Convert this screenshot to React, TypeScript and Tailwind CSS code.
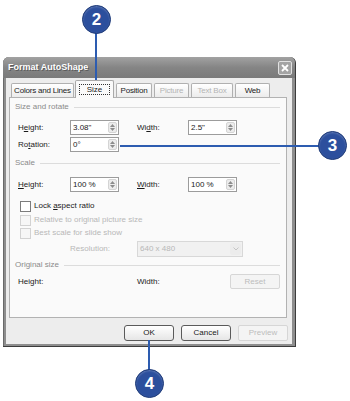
import React from "react";

const FONT = { fontFamily: '"Liberation Sans", Arial, sans-serif' };

function Spin() {
  return (
    <div className="flex h-[11px] w-[9px] flex-col items-center justify-center gap-[1px] rounded-[2px] border border-[#d4d4d4] bg-[#ececec]">
      <svg width="5" height="3" viewBox="0 0 5 3">
        <path d="M0 3 L2.5 0 L5 3Z" fill="#8c8c8c" />
      </svg>
      <svg width="5" height="3" viewBox="0 0 5 3">
        <path d="M0 0 L2.5 3 L5 0Z" fill="#8c8c8c" />
      </svg>
    </div>
  );
}

function Field({ value }: { value: string }) {
  return (
    <div className="flex h-[15px] w-[49px] items-center justify-between border border-[#9c9c9c] bg-white pl-[2px] pr-[1px]">
      <span className="whitespace-nowrap text-[8px] leading-none text-[#1a1a1a]">{value}</span>
      <Spin />
    </div>
  );
}

function Group({ label }: { label: string }) {
  return (
    <div className="flex h-[10px] items-center pl-[5px] pr-[6px]">
      <span className="whitespace-nowrap text-[8px] leading-none text-[#8a8a8a]">{label}</span>
      <div className="ml-[5px] h-px flex-1 bg-[#dcdcdc]" />
    </div>
  );
}

function Check({ label, disabled }: { label: React.ReactNode; disabled?: boolean }) {
  return (
    <div className="flex h-[12px] items-center pl-[10px]">
      <div
        className={
          disabled
            ? "h-[11px] w-[11px] border border-[#d2d2d2] bg-[#f6f6f6]"
            : "h-[11px] w-[11px] border border-[#7c7c7c] bg-white"
        }
      />
      <span
        className={
          disabled
            ? "ml-[3px] whitespace-nowrap text-[8px] leading-none text-[#b8b8b8]"
            : "ml-[3px] whitespace-nowrap text-[8px] leading-none text-[#1a1a1a]"
        }
      >
        {label}
      </span>
    </div>
  );
}

function Tab({
  label,
  w,
  disabled,
  selected,
}: {
  label: string;
  w: string;
  disabled?: boolean;
  selected?: boolean;
}) {
  if (selected) {
    return (
      <div
        className={`${w} relative z-10 -mb-px ml-[1px] flex h-[18px] shrink-0 items-center justify-center rounded-t-[2px] border border-b-0 border-[#a9a9a9] bg-[#fafafa] px-[3px]`}
      >
        <div className="flex h-[11px] w-full items-center justify-center border border-dotted border-[#333]">
          <span className="whitespace-nowrap text-[8px] leading-none text-[#1a1a1a]">{label}</span>
        </div>
      </div>
    );
  }
  return (
    <div
      className={`${w} ml-[2px] flex h-[14px] shrink-0 items-center justify-center rounded-t-[2px] border border-b-0 border-[#b0b0b0] bg-gradient-to-b from-[#ffffff] to-[#ececec]`}
    >
      <span
        className={
          disabled
            ? "whitespace-nowrap text-[8px] leading-none tracking-[-0.2px] text-[#b4b4b4]"
            : "whitespace-nowrap text-[8px] leading-none tracking-[-0.2px] text-[#1a1a1a]"
        }
      >
        {label}
      </span>
    </div>
  );
}

function Btn({ label, disabled }: { label: string; disabled?: boolean }) {
  return (
    <div
      className={
        disabled
          ? "flex h-[16px] w-[50px] items-center justify-center rounded-[2px] border border-[#d6d6d6] bg-[#f4f4f4]"
          : "flex h-[16px] w-[50px] items-center justify-center rounded-[3px] border border-[#5a5a5a] bg-gradient-to-b from-[#ffffff] to-[#e6e6e6]"
      }
    >
      <span
        className={
          disabled
            ? "text-[8px] leading-none text-[#bcbcbc]"
            : "text-[8px] leading-none text-[#1a1a1a]"
        }
      >
        {label}
      </span>
    </div>
  );
}

function Badge({ n, cls }: { n: string; cls: string }) {
  return (
    <div
      className={`${cls} absolute flex h-[29px] w-[29px] items-center justify-center rounded-full border border-[#1f3b78] bg-[#2c4f9d] shadow-[inset_0_1px_2px_rgba(255,255,255,0.25)]`}
    >
      <span
        className="text-[17px] font-bold leading-none text-white"
        style={{ fontFamily: '"Liberation Sans Narrow", "Liberation Sans", Arial, sans-serif' }}
      >
        {n}
      </span>
    </div>
  );
}

export default function App() {
  return (
    <div className="relative h-[401px] w-[350px] overflow-hidden bg-white" style={FONT}>
      {/* Dialog */}
      <div className="ml-[3px] mt-[57px] flex h-[290px] w-[293px] flex-col rounded-t-[6px] border-b border-r border-[#3c3c3c] bg-[#8e8e8e] shadow-[inset_1px_0_0_#6a6a6a]">
        {/* Title bar */}
        <div className="flex h-[21px] items-center justify-between rounded-t-[6px] bg-gradient-to-b from-[#a2a2a2] via-[#858585] to-[#7a7a7a] pl-[5px] pr-[3px]">
          <span className="whitespace-nowrap text-[9px] font-bold leading-none text-white [text-shadow:1px_1px_0_#5a5a5a]">
            Format AutoShape
          </span>
          <div className="flex h-[14px] w-[14px] items-center justify-center rounded-[2px] border border-[#e2e2e2] bg-[#a4a4a4]">
            <svg width="8" height="8" viewBox="0 0 8 8">
              <path d="M1 1 L7 7 M7 1 L1 7" stroke="#ffffff" strokeWidth="1.8" />
            </svg>
          </div>
        </div>
        {/* Body */}
        <div className="mx-[3px] mb-[2px] flex flex-1 flex-col bg-[#ededed] pl-[3px] pr-[4px] pt-[2px]">
          {/* Tabs */}
          <div className="flex h-[17px] items-end">
            <Tab label="Colors and Lines" w="w-[63px]" />
            <Tab label="Size" w="w-[39px]" selected />
            <Tab label="Position" w="w-[36px]" />
            <Tab label="Picture" w="w-[35px]" disabled />
            <Tab label="Text Box" w="w-[42px]" disabled />
            <Tab label="Web" w="w-[35px]" />
          </div>
          {/* Panel */}
          <div className="mr-[1px] flex h-[221px] flex-col border border-[#b2b2b2] bg-[#fafafa] pt-[4px]">
            <Group label="Size and rotate" />
            <div className="mt-[8px] flex items-center pl-[8px]">
              <span className="w-[52px] text-[8px] leading-none text-[#1a1a1a]">
                H<span className="underline">e</span>ight:
              </span>
              <Field value={'3.08"'} />
              <div className="w-[18px]" />
              <span className="w-[51px] text-[8px] leading-none text-[#1a1a1a]">
                Wi<span className="underline">d</span>th:
              </span>
              <Field value={'2.5"'} />
            </div>
            <div className="mt-[2px] flex items-center pl-[8px]">
              <span className="w-[52px] text-[8px] leading-none text-[#1a1a1a]">
                Ro<span className="underline">t</span>ation:
              </span>
              <Field value="0°" />
            </div>
            <div className="mt-[6px]">
              <Group label="Scale" />
            </div>
            <div className="mt-[9px] flex items-center pl-[8px]">
              <span className="w-[52px] text-[8px] leading-none text-[#1a1a1a]">
                <span className="underline">H</span>eight:
              </span>
              <Field value="100 %" />
              <div className="w-[18px]" />
              <span className="w-[51px] text-[8px] leading-none text-[#1a1a1a]">
                <span className="underline">W</span>idth:
              </span>
              <Field value="100 %" />
            </div>
            <div className="mt-[8px]">
              <Check
                label={
                  <>
                    Lock <span className="underline">a</span>spect ratio
                  </>
                }
              />
            </div>
            <div className="mt-[2px]">
              <Check label="Relative to original picture size" disabled />
            </div>
            <div className="mt-[1px]">
              <Check label="Best scale for slide show" disabled />
            </div>
            <div className="mt-[2px] flex items-center pl-[60px]">
              <span className="w-[67px] text-[8px] leading-none text-[#b8b8b8]">Resolution:</span>
              <div className="flex h-[16px] w-[106px] items-center justify-between border border-[#d8d8d8] bg-[#f1f1f1] pl-[2px] pr-[1px]">
                <span className="whitespace-nowrap text-[8px] leading-none text-[#b8b8b8]">640 x 480</span>
                <div className="flex h-[12px] w-[11px] items-center justify-center rounded-[2px] bg-[#ececec]">
                  <svg width="6" height="4" viewBox="0 0 6 4">
                    <path d="M0.5 0.5 L3 3 L5.5 0.5" stroke="#c4c4c4" strokeWidth="1" fill="none" />
                  </svg>
                </div>
              </div>
            </div>
            <div className="mt-[3px]">
              <Group label="Original size" />
            </div>
            <div className="mt-[4px] flex items-center pl-[8px]">
              <span className="w-[119px] text-[8px] leading-none text-[#1a1a1a]">Height:</span>
              <span className="w-[93px] text-[8px] leading-none text-[#1a1a1a]">Width:</span>
              <div className="flex h-[15px] w-[50px] items-center justify-center rounded-[2px] border border-[#d6d6d6] bg-[#f4f4f4]">
                <span className="text-[8px] leading-none text-[#bcbcbc]">Reset</span>
              </div>
            </div>
          </div>
          {/* Buttons */}
          <div className="mt-[7px] flex justify-end gap-[7px]">
            <Btn label="OK" />
            <Btn label="Cancel" />
            <Btn label="Preview" disabled />
          </div>
        </div>
      </div>

      {/* Callouts */}
      <div className="absolute left-[95px] top-[32px] h-[52px] w-[2px] bg-[#2d5cb0]" />
      <Badge n="2" cls="left-[82px] top-[5px]" />
      <div className="absolute left-[120px] top-[145px] h-[2px] w-[200px] bg-[#2d5cb0]" />
      <Badge n="3" cls="left-[318px] top-[131px]" />
      <div className="absolute left-[148px] top-[340px] h-[30px] w-[2px] bg-[#2d5cb0]" />
      <Badge n="4" cls="left-[135px] top-[369px]" />
    </div>
  );
}
